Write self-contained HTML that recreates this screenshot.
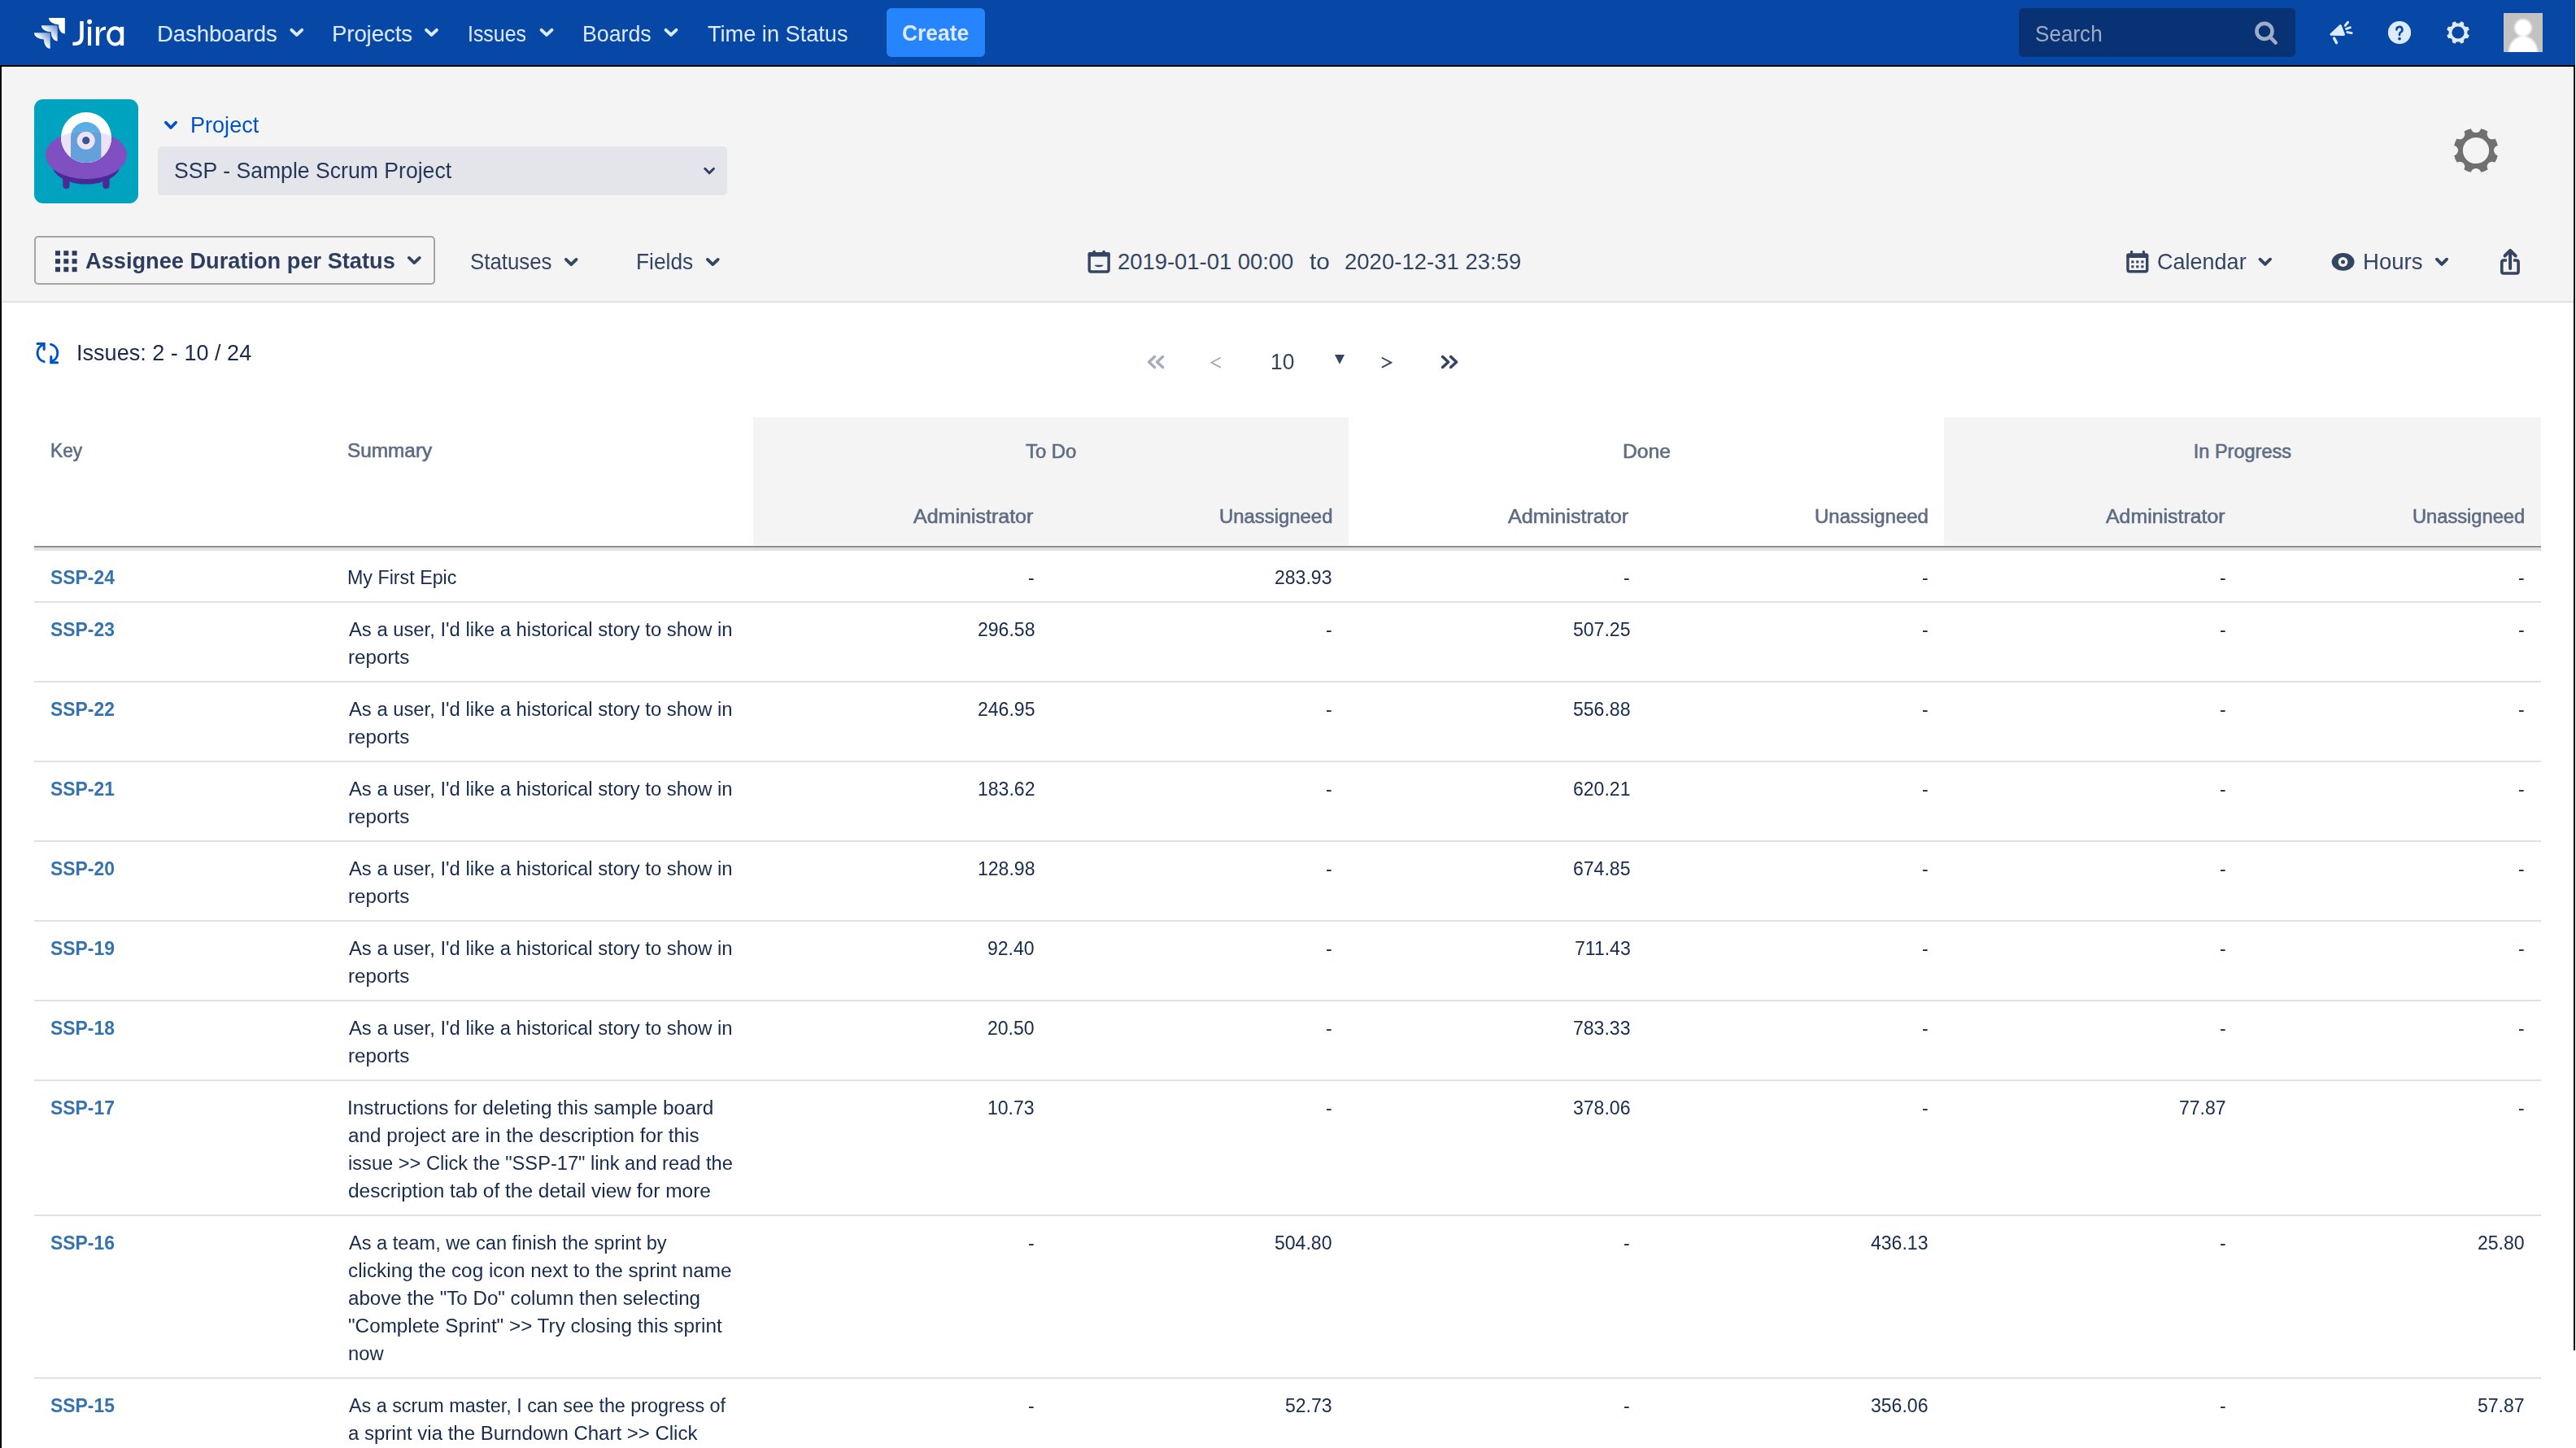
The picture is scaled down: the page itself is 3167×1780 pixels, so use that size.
<!DOCTYPE html>
<html><head><meta charset="utf-8"><title>Time in Status</title>
<style>
html,body{margin:0;padding:0;}
body{width:3167px;height:1780px;overflow:hidden;position:relative;background:#fff;font-family:"Liberation Sans",sans-serif;}
.t{position:absolute;white-space:pre;line-height:1;transform-origin:0 0;}
.b{position:absolute;}
svg.ov{position:absolute;left:0;top:0;}
</style></head><body>

<div class="b" style="left:0;top:0;width:3166px;height:80px;background:#0747a6"></div>
<div class="b" style="left:0;top:80px;width:3166px;height:2px;background:#000"></div>
<div class="b" style="left:2px;top:82px;width:3162px;height:288px;background:#f4f4f4"></div>
<div class="b" style="left:2px;top:370px;width:3162px;height:2px;background:#dfe1e6"></div>
<div class="b" style="left:0;top:80px;width:2px;height:1700px;background:#000"></div>
<div class="b" style="left:2px;top:82px;width:3162px;height:1px;background:#fff"></div>
<div class="b" style="left:2px;top:82px;width:1px;height:288px;background:#fff"></div>
<div class="b" style="left:3163px;top:82px;width:1px;height:288px;background:#fff"></div>
<div class="b" style="left:3164px;top:80px;width:2px;height:1580px;background:#000"></div>
<div class="b" style="left:1090px;top:10px;width:121px;height:60px;border-radius:6px;background:#2684ff"></div>
<div class="b" style="left:2482px;top:10px;width:340px;height:60px;border-radius:6px;background:#083273"></div>
<div class="b" style="left:194px;top:180px;width:700px;height:60px;border-radius:5px;background:#e4e5ea"></div>
<div class="b" style="left:42px;top:290px;width:489px;height:56px;border:2px solid #a5a5a5;border-radius:5px;"></div>
<div class="b" style="left:926px;top:513px;width:732px;height:157px;background:#f4f4f4"></div>
<div class="b" style="left:2390px;top:513px;width:734px;height:157px;background:#f4f4f4"></div>
<div class="b" style="left:42px;top:671px;width:3082px;height:2px;background:#8f8f8f"></div>
<div class="b" style="left:42px;top:673px;width:3082px;height:4px;background:#dfe1e6"></div>
<span class="t" style="left:193.00px;top:27.85px;font-size:27.4px;color:#deebff;">Dashboards</span>
<span class="t" style="left:408.00px;top:27.85px;font-size:27.4px;color:#deebff;">Projects</span>
<span class="t" style="left:575.18px;top:27.85px;font-size:27.4px;color:#deebff;transform:scaleX(0.9091);">Issues</span>
<span class="t" style="left:716.05px;top:27.85px;font-size:27.4px;color:#deebff;transform:scaleX(0.9762);">Boards</span>
<span class="t" style="left:869.50px;top:27.85px;font-size:27.4px;color:#deebff;transform:scaleX(0.9913);">Time in Status</span>
<span class="t" style="left:1109.06px;top:27.34px;font-size:28px;color:#deebff;font-weight:bold;transform:scaleX(0.9419);">Create</span>
<span class="t" style="left:2502.05px;top:27.85px;font-size:27.4px;color:#9eacc6;transform:scaleX(0.9524);">Search</span>
<span class="t" style="left:234.02px;top:139.85px;font-size:27.4px;color:#0052cc;transform:scaleX(0.9881);">Project</span>
<span class="t" style="left:214.03px;top:195.85px;font-size:27.4px;color:#253858;transform:scaleX(0.9714);">SSP - Sample Scrum Project</span>
<span class="t" style="left:104.50px;top:307.35px;font-size:27.4px;color:#2e3d5f;font-weight:bold;transform:scaleX(0.9927);">Assignee Duration per Status</span>
<span class="t" style="left:577.56px;top:307.85px;font-size:27.4px;color:#344563;transform:scaleX(0.9429);">Statuses</span>
<span class="t" style="left:782.48px;top:307.85px;font-size:27.4px;color:#344563;transform:scaleX(0.9614);">Fields</span>
<span class="t" style="left:1374.00px;top:307.85px;font-size:27.4px;color:#344563;">2019-01-01 00:00</span>
<span class="t" style="left:1610.00px;top:307.85px;font-size:27.4px;color:#344563;transform:scaleX(1.0909);">to</span>
<span class="t" style="left:1653.00px;top:307.85px;font-size:27.4px;color:#344563;transform:scaleX(1.0047);">2020-12-31 23:59</span>
<span class="t" style="left:2651.51px;top:307.85px;font-size:27.4px;color:#344563;transform:scaleX(0.9864);">Calendar</span>
<span class="t" style="left:2904.59px;top:307.85px;font-size:27.4px;color:#344563;transform:scaleX(1.0057);">Hours</span>
<span class="t" style="left:94.02px;top:419.85px;font-size:27.4px;color:#172b4d;transform:scaleX(0.9884);">Issues: 2 - 10 / 24</span>
<span class="t" style="left:1562.07px;top:430.55px;font-size:27.4px;color:#344563;transform:scaleX(0.9643);">10</span>
<span class="t" style="left:61.53px;top:543.14px;font-size:23.5px;color:#5e6c84;transform:scaleX(0.9650);-webkit-text-stroke:0.6px #5e6c84;">Key</span>
<span class="t" style="left:427.16px;top:543.14px;font-size:23.5px;color:#5e6c84;transform:scaleX(1.0360);-webkit-text-stroke:0.6px #5e6c84;">Summary</span>
<span class="t" style="left:1260.80px;top:543.64px;font-size:23.5px;color:#5e6c84;transform:scaleX(1.0164);-webkit-text-stroke:0.6px #5e6c84;">To Do</span>
<span class="t" style="left:1994.65px;top:543.64px;font-size:23.5px;color:#5e6c84;transform:scaleX(1.0473);-webkit-text-stroke:0.6px #5e6c84;">Done</span>
<span class="t" style="left:2696.80px;top:543.64px;font-size:23.5px;color:#5e6c84;-webkit-text-stroke:0.6px #5e6c84;">In Progress</span>
<span class="t" style="left:1123.06px;top:623.64px;font-size:23.5px;color:#5e6c84;transform:scaleX(1.0643);-webkit-text-stroke:0.6px #5e6c84;">Administrator</span>
<span class="t" style="left:1498.78px;top:623.64px;font-size:23.5px;color:#5e6c84;transform:scaleX(1.0163);-webkit-text-stroke:0.6px #5e6c84;">Unassigneed</span>
<span class="t" style="left:1854.47px;top:623.64px;font-size:23.5px;color:#5e6c84;transform:scaleX(1.0707);-webkit-text-stroke:0.6px #5e6c84;">Administrator</span>
<span class="t" style="left:2230.88px;top:623.64px;font-size:23.5px;color:#5e6c84;transform:scaleX(1.0200);-webkit-text-stroke:0.6px #5e6c84;">Unassigneed</span>
<span class="t" style="left:2588.86px;top:623.64px;font-size:23.5px;color:#5e6c84;transform:scaleX(1.0586);-webkit-text-stroke:0.6px #5e6c84;">Administrator</span>
<span class="t" style="left:2965.59px;top:623.64px;font-size:23.5px;color:#5e6c84;transform:scaleX(1.0074);-webkit-text-stroke:0.6px #5e6c84;">Unassigneed</span>
<span class="t" style="left:61.77px;top:699.14px;font-size:23.5px;color:#3572b0;font-weight:bold;transform:scaleX(0.9750);">SSP-24</span>
<span class="t" style="left:426.82px;top:699.14px;font-size:23.5px;color:#172b4d;transform:scaleX(0.9896);">My First Epic</span>
<span class="t" style="left:1264.44px;top:699.14px;font-size:23.5px;color:#172b4d;transform:scaleX(0.9800);">-</span>
<span class="t" style="left:1567.42px;top:699.14px;font-size:23.5px;color:#172b4d;transform:scaleX(0.9800);">283.93</span>
<span class="t" style="left:1996.44px;top:699.14px;font-size:23.5px;color:#172b4d;transform:scaleX(0.9800);">-</span>
<span class="t" style="left:2362.74px;top:699.14px;font-size:23.5px;color:#172b4d;transform:scaleX(0.9800);">-</span>
<span class="t" style="left:2729.14px;top:699.14px;font-size:23.5px;color:#172b4d;transform:scaleX(0.9800);">-</span>
<span class="t" style="left:3095.74px;top:699.14px;font-size:23.5px;color:#172b4d;transform:scaleX(0.9800);">-</span>
<div class="b" style="left:42px;top:739px;width:3082px;height:2px;background:#dfe1e6"></div>
<span class="t" style="left:61.77px;top:763.14px;font-size:23.5px;color:#3572b0;font-weight:bold;transform:scaleX(0.9750);">SSP-23</span>
<span class="t" style="left:428.80px;top:763.14px;font-size:23.5px;color:#172b4d;transform:scaleX(1.0127);">As a user, I'd like a historical story to show in</span>
<span class="t" style="left:427.77px;top:797.14px;font-size:23.5px;color:#172b4d;transform:scaleX(1.0292);">reports</span>
<span class="t" style="left:1201.72px;top:763.14px;font-size:23.5px;color:#172b4d;transform:scaleX(0.9800);">296.58</span>
<span class="t" style="left:1630.14px;top:763.14px;font-size:23.5px;color:#172b4d;transform:scaleX(0.9800);">-</span>
<span class="t" style="left:1933.72px;top:763.14px;font-size:23.5px;color:#172b4d;transform:scaleX(0.9800);">507.25</span>
<span class="t" style="left:2362.74px;top:763.14px;font-size:23.5px;color:#172b4d;transform:scaleX(0.9800);">-</span>
<span class="t" style="left:2729.14px;top:763.14px;font-size:23.5px;color:#172b4d;transform:scaleX(0.9800);">-</span>
<span class="t" style="left:3095.74px;top:763.14px;font-size:23.5px;color:#172b4d;transform:scaleX(0.9800);">-</span>
<div class="b" style="left:42px;top:837px;width:3082px;height:2px;background:#dfe1e6"></div>
<span class="t" style="left:61.77px;top:861.14px;font-size:23.5px;color:#3572b0;font-weight:bold;transform:scaleX(0.9750);">SSP-22</span>
<span class="t" style="left:428.80px;top:861.14px;font-size:23.5px;color:#172b4d;transform:scaleX(1.0127);">As a user, I'd like a historical story to show in</span>
<span class="t" style="left:427.77px;top:895.14px;font-size:23.5px;color:#172b4d;transform:scaleX(1.0292);">reports</span>
<span class="t" style="left:1201.72px;top:861.14px;font-size:23.5px;color:#172b4d;transform:scaleX(0.9800);">246.95</span>
<span class="t" style="left:1630.14px;top:861.14px;font-size:23.5px;color:#172b4d;transform:scaleX(0.9800);">-</span>
<span class="t" style="left:1933.72px;top:861.14px;font-size:23.5px;color:#172b4d;transform:scaleX(0.9800);">556.88</span>
<span class="t" style="left:2362.74px;top:861.14px;font-size:23.5px;color:#172b4d;transform:scaleX(0.9800);">-</span>
<span class="t" style="left:2729.14px;top:861.14px;font-size:23.5px;color:#172b4d;transform:scaleX(0.9800);">-</span>
<span class="t" style="left:3095.74px;top:861.14px;font-size:23.5px;color:#172b4d;transform:scaleX(0.9800);">-</span>
<div class="b" style="left:42px;top:935px;width:3082px;height:2px;background:#dfe1e6"></div>
<span class="t" style="left:61.77px;top:959.14px;font-size:23.5px;color:#3572b0;font-weight:bold;transform:scaleX(0.9750);">SSP-21</span>
<span class="t" style="left:428.80px;top:959.14px;font-size:23.5px;color:#172b4d;transform:scaleX(1.0127);">As a user, I'd like a historical story to show in</span>
<span class="t" style="left:427.77px;top:993.14px;font-size:23.5px;color:#172b4d;transform:scaleX(1.0292);">reports</span>
<span class="t" style="left:1201.72px;top:959.14px;font-size:23.5px;color:#172b4d;transform:scaleX(0.9800);">183.62</span>
<span class="t" style="left:1630.14px;top:959.14px;font-size:23.5px;color:#172b4d;transform:scaleX(0.9800);">-</span>
<span class="t" style="left:1933.72px;top:959.14px;font-size:23.5px;color:#172b4d;transform:scaleX(0.9800);">620.21</span>
<span class="t" style="left:2362.74px;top:959.14px;font-size:23.5px;color:#172b4d;transform:scaleX(0.9800);">-</span>
<span class="t" style="left:2729.14px;top:959.14px;font-size:23.5px;color:#172b4d;transform:scaleX(0.9800);">-</span>
<span class="t" style="left:3095.74px;top:959.14px;font-size:23.5px;color:#172b4d;transform:scaleX(0.9800);">-</span>
<div class="b" style="left:42px;top:1033px;width:3082px;height:2px;background:#dfe1e6"></div>
<span class="t" style="left:61.77px;top:1057.14px;font-size:23.5px;color:#3572b0;font-weight:bold;transform:scaleX(0.9750);">SSP-20</span>
<span class="t" style="left:428.80px;top:1057.14px;font-size:23.5px;color:#172b4d;transform:scaleX(1.0127);">As a user, I'd like a historical story to show in</span>
<span class="t" style="left:427.77px;top:1091.14px;font-size:23.5px;color:#172b4d;transform:scaleX(1.0292);">reports</span>
<span class="t" style="left:1201.72px;top:1057.14px;font-size:23.5px;color:#172b4d;transform:scaleX(0.9800);">128.98</span>
<span class="t" style="left:1630.14px;top:1057.14px;font-size:23.5px;color:#172b4d;transform:scaleX(0.9800);">-</span>
<span class="t" style="left:1933.72px;top:1057.14px;font-size:23.5px;color:#172b4d;transform:scaleX(0.9800);">674.85</span>
<span class="t" style="left:2362.74px;top:1057.14px;font-size:23.5px;color:#172b4d;transform:scaleX(0.9800);">-</span>
<span class="t" style="left:2729.14px;top:1057.14px;font-size:23.5px;color:#172b4d;transform:scaleX(0.9800);">-</span>
<span class="t" style="left:3095.74px;top:1057.14px;font-size:23.5px;color:#172b4d;transform:scaleX(0.9800);">-</span>
<div class="b" style="left:42px;top:1131px;width:3082px;height:2px;background:#dfe1e6"></div>
<span class="t" style="left:61.77px;top:1155.14px;font-size:23.5px;color:#3572b0;font-weight:bold;transform:scaleX(0.9750);">SSP-19</span>
<span class="t" style="left:428.80px;top:1155.14px;font-size:23.5px;color:#172b4d;transform:scaleX(1.0127);">As a user, I'd like a historical story to show in</span>
<span class="t" style="left:427.77px;top:1189.14px;font-size:23.5px;color:#172b4d;transform:scaleX(1.0292);">reports</span>
<span class="t" style="left:1214.46px;top:1155.14px;font-size:23.5px;color:#172b4d;transform:scaleX(0.9800);">92.40</span>
<span class="t" style="left:1630.14px;top:1155.14px;font-size:23.5px;color:#172b4d;transform:scaleX(0.9800);">-</span>
<span class="t" style="left:1935.68px;top:1155.14px;font-size:23.5px;color:#172b4d;transform:scaleX(0.9800);">711.43</span>
<span class="t" style="left:2362.74px;top:1155.14px;font-size:23.5px;color:#172b4d;transform:scaleX(0.9800);">-</span>
<span class="t" style="left:2729.14px;top:1155.14px;font-size:23.5px;color:#172b4d;transform:scaleX(0.9800);">-</span>
<span class="t" style="left:3095.74px;top:1155.14px;font-size:23.5px;color:#172b4d;transform:scaleX(0.9800);">-</span>
<div class="b" style="left:42px;top:1229px;width:3082px;height:2px;background:#dfe1e6"></div>
<span class="t" style="left:61.77px;top:1253.14px;font-size:23.5px;color:#3572b0;font-weight:bold;transform:scaleX(0.9750);">SSP-18</span>
<span class="t" style="left:428.80px;top:1253.14px;font-size:23.5px;color:#172b4d;transform:scaleX(1.0127);">As a user, I'd like a historical story to show in</span>
<span class="t" style="left:427.77px;top:1287.14px;font-size:23.5px;color:#172b4d;transform:scaleX(1.0292);">reports</span>
<span class="t" style="left:1214.46px;top:1253.14px;font-size:23.5px;color:#172b4d;transform:scaleX(0.9800);">20.50</span>
<span class="t" style="left:1630.14px;top:1253.14px;font-size:23.5px;color:#172b4d;transform:scaleX(0.9800);">-</span>
<span class="t" style="left:1933.72px;top:1253.14px;font-size:23.5px;color:#172b4d;transform:scaleX(0.9800);">783.33</span>
<span class="t" style="left:2362.74px;top:1253.14px;font-size:23.5px;color:#172b4d;transform:scaleX(0.9800);">-</span>
<span class="t" style="left:2729.14px;top:1253.14px;font-size:23.5px;color:#172b4d;transform:scaleX(0.9800);">-</span>
<span class="t" style="left:3095.74px;top:1253.14px;font-size:23.5px;color:#172b4d;transform:scaleX(0.9800);">-</span>
<div class="b" style="left:42px;top:1327px;width:3082px;height:2px;background:#dfe1e6"></div>
<span class="t" style="left:61.77px;top:1351.14px;font-size:23.5px;color:#3572b0;font-weight:bold;transform:scaleX(0.9750);">SSP-17</span>
<span class="t" style="left:426.73px;top:1351.14px;font-size:23.5px;color:#172b4d;transform:scaleX(1.0352);">Instructions for deleting this sample board</span>
<span class="t" style="left:427.77px;top:1385.14px;font-size:23.5px;color:#172b4d;transform:scaleX(1.0326);">and project are in the description for this</span>
<span class="t" style="left:427.79px;top:1419.14px;font-size:23.5px;color:#172b4d;transform:scaleX(1.0062);">issue &gt;&gt; Click the &quot;SSP-17&quot; link and read the</span>
<span class="t" style="left:427.76px;top:1453.14px;font-size:23.5px;color:#172b4d;transform:scaleX(1.0407);">description tab of the detail view for more</span>
<span class="t" style="left:1214.46px;top:1351.14px;font-size:23.5px;color:#172b4d;transform:scaleX(0.9800);">10.73</span>
<span class="t" style="left:1630.14px;top:1351.14px;font-size:23.5px;color:#172b4d;transform:scaleX(0.9800);">-</span>
<span class="t" style="left:1933.72px;top:1351.14px;font-size:23.5px;color:#172b4d;transform:scaleX(0.9800);">378.06</span>
<span class="t" style="left:2362.74px;top:1351.14px;font-size:23.5px;color:#172b4d;transform:scaleX(0.9800);">-</span>
<span class="t" style="left:2679.16px;top:1351.14px;font-size:23.5px;color:#172b4d;transform:scaleX(0.9800);">77.87</span>
<span class="t" style="left:3095.74px;top:1351.14px;font-size:23.5px;color:#172b4d;transform:scaleX(0.9800);">-</span>
<div class="b" style="left:42px;top:1493px;width:3082px;height:2px;background:#dfe1e6"></div>
<span class="t" style="left:61.77px;top:1517.14px;font-size:23.5px;color:#3572b0;font-weight:bold;transform:scaleX(0.9750);">SSP-16</span>
<span class="t" style="left:428.80px;top:1517.14px;font-size:23.5px;color:#172b4d;transform:scaleX(1.0036);">As a team, we can finish the sprint by</span>
<span class="t" style="left:427.77px;top:1551.14px;font-size:23.5px;color:#172b4d;transform:scaleX(1.0341);">clicking the cog icon next to the sprint name</span>
<span class="t" style="left:427.77px;top:1585.14px;font-size:23.5px;color:#172b4d;transform:scaleX(1.0269);">above the &quot;To Do&quot; column then selecting</span>
<span class="t" style="left:427.77px;top:1619.14px;font-size:23.5px;color:#172b4d;transform:scaleX(1.0327);">&quot;Complete Sprint&quot; &gt;&gt; Try closing this sprint</span>
<span class="t" style="left:427.79px;top:1653.14px;font-size:23.5px;color:#172b4d;transform:scaleX(1.0093);">now</span>
<span class="t" style="left:1264.44px;top:1517.14px;font-size:23.5px;color:#172b4d;transform:scaleX(0.9800);">-</span>
<span class="t" style="left:1567.42px;top:1517.14px;font-size:23.5px;color:#172b4d;transform:scaleX(0.9800);">504.80</span>
<span class="t" style="left:1996.44px;top:1517.14px;font-size:23.5px;color:#172b4d;transform:scaleX(0.9800);">-</span>
<span class="t" style="left:2300.02px;top:1517.14px;font-size:23.5px;color:#172b4d;transform:scaleX(0.9800);">436.13</span>
<span class="t" style="left:2729.14px;top:1517.14px;font-size:23.5px;color:#172b4d;transform:scaleX(0.9800);">-</span>
<span class="t" style="left:3045.76px;top:1517.14px;font-size:23.5px;color:#172b4d;transform:scaleX(0.9800);">25.80</span>
<div class="b" style="left:42px;top:1693px;width:3082px;height:2px;background:#dfe1e6"></div>
<span class="t" style="left:61.77px;top:1717.14px;font-size:23.5px;color:#3572b0;font-weight:bold;transform:scaleX(0.9750);">SSP-15</span>
<span class="t" style="left:428.80px;top:1717.14px;font-size:23.5px;color:#172b4d;transform:scaleX(0.9931);">As a scrum master, I can see the progress of</span>
<span class="t" style="left:427.78px;top:1751.14px;font-size:23.5px;color:#172b4d;transform:scaleX(1.0210);">a sprint via the Burndown Chart &gt;&gt; Click</span>
<span class="t" style="left:1264.44px;top:1717.14px;font-size:23.5px;color:#172b4d;transform:scaleX(0.9800);">-</span>
<span class="t" style="left:1580.16px;top:1717.14px;font-size:23.5px;color:#172b4d;transform:scaleX(0.9800);">52.73</span>
<span class="t" style="left:1996.44px;top:1717.14px;font-size:23.5px;color:#172b4d;transform:scaleX(0.9800);">-</span>
<span class="t" style="left:2300.02px;top:1717.14px;font-size:23.5px;color:#172b4d;transform:scaleX(0.9800);">356.06</span>
<span class="t" style="left:2729.14px;top:1717.14px;font-size:23.5px;color:#172b4d;transform:scaleX(0.9800);">-</span>
<span class="t" style="left:3045.76px;top:1717.14px;font-size:23.5px;color:#172b4d;transform:scaleX(0.9800);">57.87</span>
<svg class="ov" width="3167" height="1780" viewBox="0 0 3167 1780">
<defs>
<linearGradient id="jg" x1="1" y1="0" x2="0.45" y2="0.55"><stop offset="0" stop-color="#fff" stop-opacity="0.35"/><stop offset="1" stop-color="#fff" stop-opacity="1"/></linearGradient>
</defs>
<path transform="translate(60.07 22.02)" d="M0 0 H19.2 Q19.74 0 19.74 0.6 V19.5 A7.94 11.3 0 0 1 11.8 8.2 A11.8 8.2 0 0 1 0 0 Z" fill="#fff"/>
<path transform="translate(50.93 31.17)" d="M0 0 H19.2 Q19.74 0 19.74 0.6 V19.5 A7.94 11.3 0 0 1 11.8 8.2 A11.8 8.2 0 0 1 0 0 Z" fill="url(#jg)"/>
<path transform="translate(42.02 40.31)" d="M0 0 H19.2 Q19.74 0 19.74 0.6 V19.5 A7.94 11.3 0 0 1 11.8 8.2 A11.8 8.2 0 0 1 0 0 Z" fill="url(#jg)"/>
<g fill="#fff">
<path d="M98.3 25.9 H102.7 V45 Q102.7 56 92 56 H89.4 V51.7 H92 Q98.3 51.7 98.3 45 Z"/>
<circle cx="110.1" cy="26.8" r="2.95"/><rect x="108" y="32.9" width="4.1" height="23.1"/>
<rect x="117.9" y="32.9" width="4.2" height="23.1"/><path d="M122.1 43 Q122.1 32.6 130 32.6 V36.7 Q122.1 36.7 122.1 45 Z"/>
<rect x="147.9" y="32.9" width="4.3" height="23.1"/>
</g>
<ellipse cx="141.6" cy="44.4" rx="8.5" ry="10.05" fill="none" stroke="#fff" stroke-width="4.1"/>
<path d="M358.40 36.90 L364.80 42.90 L371.20 36.90" fill="none" stroke="#deebff" stroke-width="4" stroke-linecap="round" stroke-linejoin="round"/>
<path d="M524.10 36.90 L530.50 42.90 L536.90 36.90" fill="none" stroke="#deebff" stroke-width="4" stroke-linecap="round" stroke-linejoin="round"/>
<path d="M665.60 36.90 L672.00 42.90 L678.40 36.90" fill="none" stroke="#deebff" stroke-width="4" stroke-linecap="round" stroke-linejoin="round"/>
<path d="M818.60 36.90 L825.00 42.90 L831.40 36.90" fill="none" stroke="#deebff" stroke-width="4" stroke-linecap="round" stroke-linejoin="round"/>
<circle cx="2784" cy="38.4" r="9.5" fill="none" stroke="#9eacc6" stroke-width="4.6"/>
<path d="M2791.5 46 L2797.6 52.5" stroke="#9eacc6" stroke-width="4.6" stroke-linecap="round"/>
<path d="M2865.8 42.3 L2877.4 31.6 L2881.6 42.5 Z" fill="#deebff" stroke="#deebff" stroke-width="2.8" stroke-linejoin="round"/>
<path d="M2869.6 47 L2872.6 52.6" stroke="#deebff" stroke-width="3.4" stroke-linecap="round"/>
<path d="M2883.3 31.4 L2886.6 27.3" stroke="#deebff" stroke-width="3.0" stroke-linecap="round"/>
<path d="M2884.6 35.4 L2889.3 33.9" stroke="#deebff" stroke-width="3.0" stroke-linecap="round"/>
<path d="M2886 39.6 L2891.1 40.6" stroke="#deebff" stroke-width="3.0" stroke-linecap="round"/>
<circle cx="2950" cy="40" r="14.1" fill="#deebff"/>
<path d="M2946.4 36.4 A3.5 3.5 0 1 1 2951.4 39.6 Q2950 40.4 2950 41.9 V43" fill="none" stroke="#0747a6" stroke-width="2.6" stroke-linecap="round"/>
<circle cx="2950" cy="47.6" r="1.85" fill="#0747a6"/>
<mask id="g1"><rect x="3006" y="24" width="32" height="32" fill="black"/><circle cx="3022" cy="40" r="14" fill="white"/><circle cx="3022" cy="40" r="7.6" fill="black"/><circle cx="3022.00" cy="25.40" r="3.3" fill="black"/><circle cx="3032.32" cy="29.68" r="3.3" fill="black"/><circle cx="3036.60" cy="40.00" r="3.3" fill="black"/><circle cx="3032.32" cy="50.32" r="3.3" fill="black"/><circle cx="3022.00" cy="54.60" r="3.3" fill="black"/><circle cx="3011.68" cy="50.32" r="3.3" fill="black"/><circle cx="3007.40" cy="40.00" r="3.3" fill="black"/><circle cx="3011.68" cy="29.68" r="3.3" fill="black"/></mask><rect x="3006" y="24" width="32" height="32" fill="#deebff" mask="url(#g1)"/>
<rect x="3078" y="16" width="48" height="48" fill="#c2c2c2"/>
<clipPath id="avc"><rect x="3078" y="16" width="48" height="48"/></clipPath>
<filter id="avb" x="-20%" y="-20%" width="140%" height="140%"><feGaussianBlur stdDeviation="1.1"/></filter><g clip-path="url(#avc)"><g fill="#fff" filter="url(#avb)"><ellipse cx="3102" cy="63.8" rx="17.8" ry="19.2"/><circle cx="3102" cy="34.2" r="10.6"/></g></g>
<g transform="translate(42 122)">
<rect x="0" y="0" width="128" height="128" rx="11" fill="#00a3bf"/>
<clipPath id="pa"><rect x="0" y="0" width="128" height="128" rx="11"/></clipPath>
<g clip-path="url(#pa)">
<ellipse cx="64" cy="80" rx="42" ry="24.5" fill="#4b2a98"/>
<rect x="35.2" y="90" width="8.3" height="20" rx="4.1" fill="#4b2a98"/>
<rect x="84.3" y="90" width="8.3" height="20" rx="4.1" fill="#4b2a98"/>
<ellipse cx="64" cy="68.5" rx="50" ry="29.6" fill="#8050c2"/>
<clipPath id="dome"><circle cx="64" cy="47" r="31"/></clipPath>
<clipPath id="sauc"><ellipse cx="64" cy="68.5" rx="50" ry="29.6"/></clipPath>
<circle cx="64" cy="47" r="31" fill="#ffffff"/>
<g clip-path="url(#dome)">
<path d="M45 46.7 A18.7 18.7 0 0 1 82.4 46.7 V90 H45 Z" fill="#5baee3"/>
<g clip-path="url(#sauc)">
<rect x="0" y="0" width="128" height="128" fill="#ebe2f5"/>
<path d="M45 46.7 A18.7 18.7 0 0 1 82.4 46.7 V90 H45 Z" fill="#64a0da"/>
</g></g>
<circle cx="63.7" cy="50.7" r="11" fill="#ebe2f5"/>
<circle cx="63.7" cy="50.7" r="4.6" fill="#3c5592"/>
</g></g>
<path d="M203.80 150.60 L210.00 157.00 L216.20 150.60" fill="none" stroke="#0052cc" stroke-width="3.6" stroke-linecap="round" stroke-linejoin="round"/>
<path d="M866.70 207.30 L872.10 212.80 L877.50 207.30" fill="none" stroke="#2f3f62" stroke-width="3.0" stroke-linecap="round" stroke-linejoin="round"/>
<mask id="g2"><rect x="3014.4" y="155.4" width="59.2" height="59.2" fill="black"/><circle cx="3044" cy="185" r="27.6" fill="white"/><circle cx="3044" cy="185" r="16.1" fill="black"/><circle cx="3044.00" cy="156.70" r="6.3" fill="black"/><circle cx="3064.01" cy="164.99" r="6.3" fill="black"/><circle cx="3072.30" cy="185.00" r="6.3" fill="black"/><circle cx="3064.01" cy="205.01" r="6.3" fill="black"/><circle cx="3044.00" cy="213.30" r="6.3" fill="black"/><circle cx="3023.99" cy="205.01" r="6.3" fill="black"/><circle cx="3015.70" cy="185.00" r="6.3" fill="black"/><circle cx="3023.99" cy="164.99" r="6.3" fill="black"/></mask><rect x="3014.4" y="155.4" width="59.2" height="59.2" fill="#707070" mask="url(#g2)"/>
<rect x="68.0" y="308.2" width="6" height="6" fill="#2e3d5f"/>
<rect x="68.0" y="318.2" width="6" height="6" fill="#2e3d5f"/>
<rect x="68.0" y="328.2" width="6" height="6" fill="#2e3d5f"/>
<rect x="78.3" y="308.2" width="6" height="6" fill="#2e3d5f"/>
<rect x="78.3" y="318.2" width="6" height="6" fill="#2e3d5f"/>
<rect x="78.3" y="328.2" width="6" height="6" fill="#2e3d5f"/>
<rect x="88.6" y="308.2" width="6" height="6" fill="#2e3d5f"/>
<rect x="88.6" y="318.2" width="6" height="6" fill="#2e3d5f"/>
<rect x="88.6" y="328.2" width="6" height="6" fill="#2e3d5f"/>
<path d="M502.90 316.90 L509.30 323.10 L515.70 316.90" fill="none" stroke="#344563" stroke-width="3.8" stroke-linecap="round" stroke-linejoin="round"/>
<path d="M695.85 318.90 L702.20 325.10 L708.55 318.90" fill="none" stroke="#344563" stroke-width="3.8" stroke-linecap="round" stroke-linejoin="round"/>
<path d="M869.85 318.90 L876.30 325.10 L882.75 318.90" fill="none" stroke="#344563" stroke-width="3.8" stroke-linecap="round" stroke-linejoin="round"/>
<path d="M2778.50 318.70 L2784.80 324.90 L2791.10 318.70" fill="none" stroke="#344563" stroke-width="3.8" stroke-linecap="round" stroke-linejoin="round"/>
<path d="M2995.90 318.70 L3002.00 324.90 L3008.10 318.70" fill="none" stroke="#344563" stroke-width="3.8" stroke-linecap="round" stroke-linejoin="round"/>
<rect x="1339.2" y="311.6" width="23.9" height="22.4" rx="2.2" fill="none" stroke="#344563" stroke-width="3.4"/>
<rect x="1337.5" y="310" width="27.3" height="5.6" rx="2" fill="#344563"/>
<rect x="1343.4" y="307.8" width="3.5" height="4" rx="1.5" fill="#344563"/><rect x="1355.3" y="307.8" width="3.5" height="4" rx="1.5" fill="#344563"/>
<path d="M1345.6 325.8 H1356.6 Q1356 328.2 1351.1 328.2 Q1346.2 328.2 1345.6 325.8 Z" fill="#344563"/>
<rect x="2616" y="313.2" width="23.7" height="20.5" rx="2.2" fill="none" stroke="#344563" stroke-width="3.4"/>
<rect x="2614.3" y="311.5" width="27.1" height="5.6" rx="2" fill="#344563"/>
<rect x="2619" y="307.9" width="3.1" height="4.5" rx="1.4" fill="#344563"/><rect x="2633.9" y="307.9" width="3.1" height="4.5" rx="1.4" fill="#344563"/>
<rect x="2620.35" y="320.35" width="3.1" height="3.1" fill="#344563"/>
<rect x="2620.35" y="326.25" width="3.1" height="3.1" fill="#344563"/>
<rect x="2626.25" y="320.35" width="3.1" height="3.1" fill="#344563"/>
<rect x="2626.25" y="326.25" width="3.1" height="3.1" fill="#344563"/>
<rect x="2632.35" y="320.35" width="3.1" height="3.1" fill="#344563"/>
<rect x="2632.35" y="326.25" width="3.1" height="3.1" fill="#344563"/>
<ellipse cx="2880.6" cy="321.9" rx="13.9" ry="10.9" fill="#344563"/><circle cx="2880.5" cy="322" r="5.9" fill="#f4f4f4"/><circle cx="2880.5" cy="322" r="2.5" fill="#344563"/>
<path d="M3081.9 320 H3078 Q3075.8 320 3075.8 322.2 V333.8 Q3075.8 336 3078 336 H3093.9 Q3096.1 336 3096.1 333.8 V322.2 Q3096.1 320 3093.9 320 H3090" fill="none" stroke="#344563" stroke-width="3.6"/>
<path d="M3086.1 330 V310" stroke="#344563" stroke-width="4" stroke-linecap="round"/>
<path d="M3079.5 314.5 L3086.1 307.9 L3092.7 314.5" fill="none" stroke="#344563" stroke-width="4" stroke-linecap="round" stroke-linejoin="round"/>
<path d="M54.2 444.6 A10.9 10.9 0 0 1 53.8 423.6" fill="none" stroke="#0052cc" stroke-width="3" stroke-linecap="round"/>
<path d="M46 422.4 H54.2 V429.4" fill="none" stroke="#0052cc" stroke-width="3" stroke-linecap="round" stroke-linejoin="miter"/>
<path d="M62.6 423.4 A10.9 10.9 0 0 1 63 444.4" fill="none" stroke="#0052cc" stroke-width="3" stroke-linecap="round"/>
<path d="M70.6 445.8 H62.8 V438.2" fill="none" stroke="#0052cc" stroke-width="3" stroke-linecap="round" stroke-linejoin="miter"/>
<path d="M1419.5 438.5 L1412.5 445 L1419.5 451.5" fill="none" stroke="#a5adba" stroke-width="3.5" stroke-linecap="round" stroke-linejoin="round"/>
<path d="M1429.5 438.5 L1422.5 445 L1429.5 451.5" fill="none" stroke="#a5adba" stroke-width="3.5" stroke-linecap="round" stroke-linejoin="round"/>
<path d="M1773.6 438.5 L1780.6 445 L1773.6 451.5" fill="none" stroke="#344563" stroke-width="3.5" stroke-linecap="round" stroke-linejoin="round"/>
<path d="M1783.6 438.5 L1790.6 445 L1783.6 451.5" fill="none" stroke="#344563" stroke-width="3.5" stroke-linecap="round" stroke-linejoin="round"/>
<path d="M1641 436 H1653 L1647 447.8 Z" fill="#344563"/>
<path d="M1500.1 440 L1489.3 445.7 L1500.1 451.3" fill="none" stroke="#a5adba" stroke-width="1.9" stroke-linecap="round" stroke-linejoin="miter"/>
<path d="M1699.5 440 L1710.3 445.7 L1699.5 451.3" fill="none" stroke="#344563" stroke-width="1.9" stroke-linecap="round" stroke-linejoin="miter"/>
</svg>
</body></html>
